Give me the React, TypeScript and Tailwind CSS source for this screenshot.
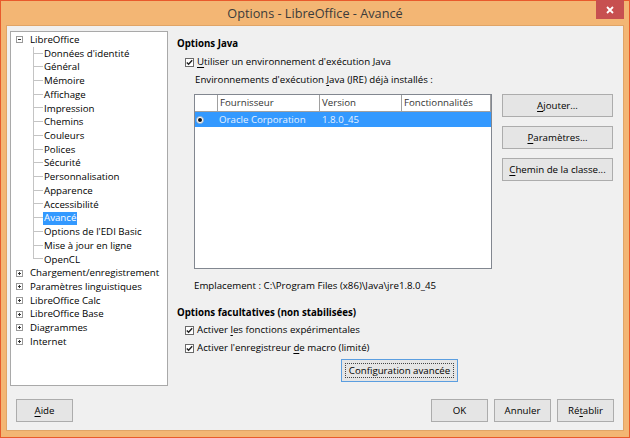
import React from "react";

const U = ({ children }: { children: React.ReactNode }) => (
  <span className="underline decoration-1 underline-offset-[1.5px]">{children}</span>
);

const Check = () => (
  <svg width="9" height="9" viewBox="0 0 9 9" className="shrink-0">
    <rect x="0.5" y="0.5" width="8" height="8" fill="#ffffff" stroke="#6a6a6a" />
    <path d="M1.8 4.4 L3.6 6.3 L7.2 2.3" fill="none" stroke="#222222" strokeWidth="1.4" />
  </svg>
);

const Expander = ({ open }: { open: boolean }) => (
  <svg width="7" height="7" viewBox="0 0 7 7" className="shrink-0">
    <rect x="0.5" y="0.5" width="6" height="6" fill="#ffffff" stroke="#9a9a9a" />
    <line x1="2" y1="3.5" x2="5" y2="3.5" stroke="#333333" strokeWidth="1" />
    {!open && <line x1="3.5" y1="2" x2="3.5" y2="5" stroke="#333333" strokeWidth="1" />}
  </svg>
);

const children = [
  "Données d'identité",
  "Général",
  "Mémoire",
  "Affichage",
  "Impression",
  "Chemins",
  "Couleurs",
  "Polices",
  "Sécurité",
  "Personnalisation",
  "Apparence",
  "Accessibilité",
  "Avancé",
  "Options de l'EDI Basic",
  "Mise à jour en ligne",
  "OpenCL",
];

const roots = [
  "Chargement/enregistrement",
  "Paramètres linguistiques",
  "LibreOffice Calc",
  "LibreOffice Base",
  "Diagrammes",
  "Internet",
];

const RootRow = ({ label, open }: { label: string; open: boolean }) => (
  <div className="h-[13.73px] flex items-center">
    <div className="w-[5px] shrink-0" />
    <Expander open={open} />
    <span className="ml-[7px] whitespace-nowrap">{label}</span>
  </div>
);

const Tree = () => (
  <div className="w-[158px] h-[355px] bg-white border border-[#a9a9a9] pt-[1px] shrink-0 overflow-hidden">
    <RootRow label="LibreOffice" open />
    {children.map((c, i) => {
      const last = i === children.length - 1;
      const sel = c === "Avancé";
      return (
        <div key={c} className="h-[13.73px] flex items-center">
          <div className="w-[22px] shrink-0" />
          <div className="w-[10px] h-full flex flex-col shrink-0">
            <div className="h-1/2 border-l border-b border-[#c4c4c4]" />
            <div className={"h-1/2 " + (last ? "" : "border-l border-[#c4c4c4]")} />
          </div>
          <span
            className={
              "px-[1px] h-[13px] flex items-center whitespace-nowrap " +
              (sel ? "bg-[#3399ff] text-white" : "")
            }
          >
            {c}
          </span>
        </div>
      );
    })}
    {roots.map((r) => (
      <RootRow key={r} label={r} open={false} />
    ))}
  </div>
);

const Btn = ({ children, w }: { children: React.ReactNode; w: string }) => (
  <div
    className={
      "h-[23px] flex items-center justify-center bg-[#e5e5e5] border border-[#acacac] shrink-0 " + w
    }
  >
    {children}
  </div>
);

export default function App() {
  return (
    <div className="w-[630px] h-[438px] relative flex flex-col bg-[#f3b674] border border-[#e85a2c] font-['Open_Sans',sans-serif] text-[9.7px] text-black leading-none select-none">
      <div className="h-[24px] shrink-0 flex items-center justify-center text-[12.7px] text-[#3b3b3b] pt-[1px]">
        Options - LibreOffice - Avancé
      </div>
      <div className="absolute top-[-1px] right-[5px] w-[28px] h-[19px] bg-[#c75050] flex items-center justify-center">
        <svg width="8" height="8" viewBox="0 0 8 8">
          <path d="M1 1 L7 7 M7 1 L1 7" stroke="#ffffff" strokeWidth="1.8" />
        </svg>
      </div>

      <div className="flex-1 mx-[5px] mb-[6px] bg-[#f0f0f0] border border-[#e0a466] flex flex-col">
        <div className="flex pl-[3px] pt-[5px]">
          <Tree />
          <div className="ml-[9px] flex flex-col">
            <div className="mt-[4px] h-[18px] flex items-center font-bold">Options Java</div>
            <div className="h-[18px] flex items-center pl-[8px]">
              <Check />
              <span className="ml-[3px]">
                <U>U</U>tiliser un environnement d'exécution Java
              </span>
            </div>
            <div className="h-[18px] flex items-center pl-[18px]">
              <span>
                Environnements d'exécution <U>J</U>ava (JRE) déjà installés :
              </span>
            </div>
            <div className="mt-[5px] flex pl-[17px]">
              <div className="w-[298px] h-[175px] border border-[#828790] bg-white flex flex-col shrink-0">
                <div className="flex h-[17px] border-b border-[#a0a0a0] text-[#333333]">
                  <div className="w-[23px] border-r border-[#a0a0a0]" />
                  <div className="w-[102px] border-r border-[#a0a0a0] flex items-center pl-[2px]">Fournisseur</div>
                  <div className="w-[82px] border-r border-[#a0a0a0] flex items-center pl-[2px]">Version</div>
                  <div className="w-[89px] border-r border-[#a0a0a0] flex items-center pl-[2px]">Fonctionnalités</div>
                </div>
                <div className="flex h-[15px] bg-[#3399ff] text-[#e6f1ff]">
                  <div className="w-[23px] flex items-center pl-[1px]">
                    <svg width="8" height="8" viewBox="0 0 8 8">
                      <circle cx="4" cy="4" r="3.5" fill="#ffffff" stroke="#99aabb" strokeWidth="0.8" />
                      <circle cx="4" cy="4" r="2" fill="#111111" />
                    </svg>
                  </div>
                  <div className="w-[102px] flex items-center pl-[1px]">Oracle Corporation</div>
                  <div className="w-[82px] flex items-center pl-[2px]">1.8.0_45</div>
                  <div className="w-[89px]" />
                </div>
              </div>
              <div className="ml-[10px] flex flex-col gap-[9px] w-[111px]">
                <Btn w="w-[111px]">
                  <span>
                    <U>A</U>jouter...
                  </span>
                </Btn>
                <Btn w="w-[111px]">
                  <span>
                    <U>P</U>aramètres...
                  </span>
                </Btn>
                <Btn w="w-[111px]">
                  <span>
                    <U>C</U>hemin de la classe...
                  </span>
                </Btn>
              </div>
            </div>
            <div className="mt-[8px] h-[18px] flex items-center pl-[17px]">
              {"Emplacement : C:\\Program Files (x86)\\Java\\jre1.8.0_45"}
            </div>
            <div className="mt-[9px] h-[17px] flex items-center font-bold">
              Options facultatives (non stabilisées)
            </div>
            <div className="h-[18px] flex items-center pl-[8px]">
              <Check />
              <span className="ml-[3px]">
                Activer <U>l</U>es fonctions expérimentales
              </span>
            </div>
            <div className="h-[18px] flex items-center pl-[8px]">
              <Check />
              <span className="ml-[3px]">
                Activer l'enregistreur <U>d</U>e macro (limité)
              </span>
            </div>
            <div className="mt-[2px] ml-[164px] w-[117px] h-[23px] flex bg-[#e5e5e5] border border-[#5b9ee0] p-[3px]">
              <div className="flex-1 flex items-center justify-center border border-dotted border-[#444444]">
                Configuration avancée
              </div>
            </div>
          </div>
        </div>

        <div className="flex items-center mt-[13px] h-[23px] pl-[9px] pr-[9px]">
          <Btn w="w-[57px]">
            <span>
              <U>A</U>ide
            </span>
          </Btn>
          <div className="flex-1" />
          <Btn w="w-[57px]">OK</Btn>
          <div className="w-[6px]" />
          <Btn w="w-[57px]">Annuler</Btn>
          <div className="w-[6px]" />
          <Btn w="w-[57px]">
            <span>
              Ré<U>t</U>ablir
            </span>
          </Btn>
        </div>
      </div>
    </div>
  );
}
